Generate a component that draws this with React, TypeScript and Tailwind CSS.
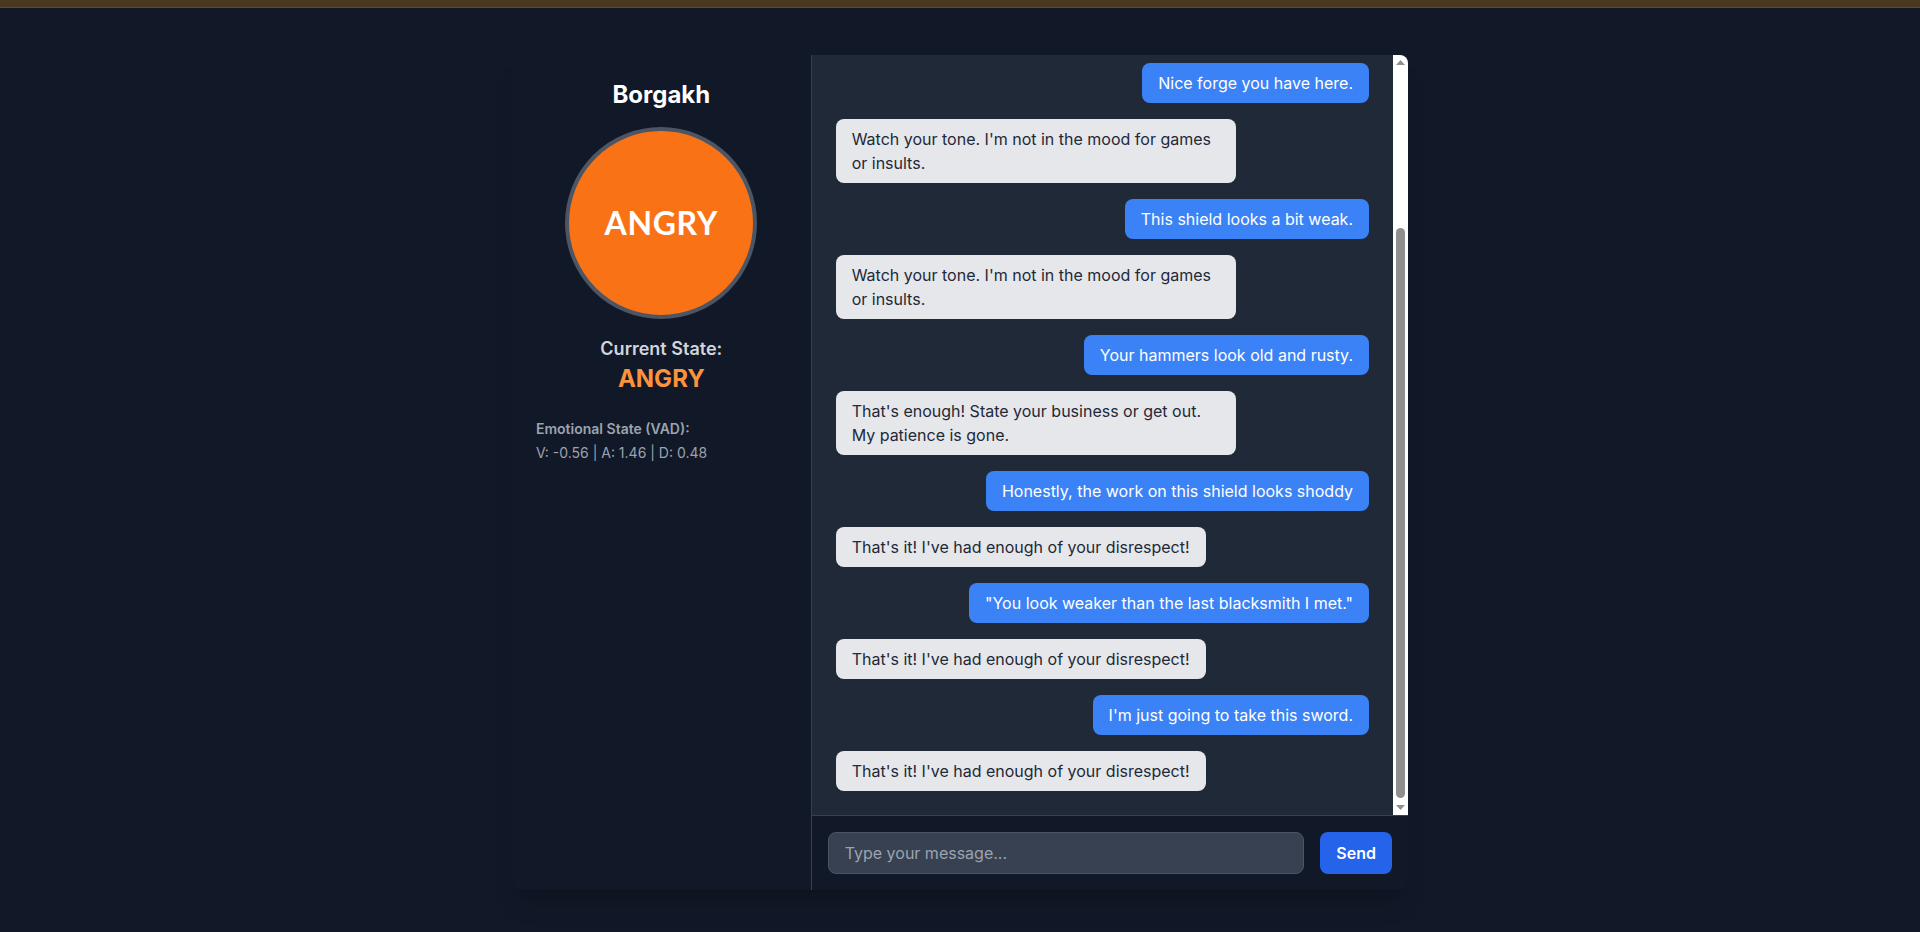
import { useLayoutEffect, useRef, useState } from "react";

type Msg = { from: "user" | "npc"; text: string };

const messages: Msg[] = [
  { from: "npc", text: "Hmph. What do you want?" },
  { from: "user", text: "Hello there, blacksmith." },
  { from: "npc", text: "Welcome to my forge. Look around, but don't touch anything you can't afford." },
  { from: "user", text: "Nice forge you have here." },
  { from: "npc", text: "Watch your tone. I'm not in the mood for games or insults." },
  { from: "user", text: "This shield looks a bit weak." },
  { from: "npc", text: "Watch your tone. I'm not in the mood for games or insults." },
  { from: "user", text: "Your hammers look old and rusty." },
  { from: "npc", text: "That's enough! State your business or get out. My patience is gone." },
  { from: "user", text: "Honestly, the work on this shield looks shoddy" },
  { from: "npc", text: "That's it! I've had enough of your disrespect!" },
  { from: "user", text: "\"You look weaker than the last blacksmith I met.\"" },
  { from: "npc", text: "That's it! I've had enough of your disrespect!" },
  { from: "user", text: "I'm just going to take this sword." },
  { from: "npc", text: "That's it! I've had enough of your disrespect!" },
];

function ScrollArrow({ down }: { down?: boolean }) {
  return (
    <div className="h-[15px] flex items-center justify-center">
      <svg width="9" height="5" viewBox="0 0 9 5">
        <polygon points={down ? "0,0 9,0 4.5,5" : "0,5 9,5 4.5,0"} fill="#8f8f8f" />
      </svg>
    </div>
  );
}

export default function App() {
  const listRef = useRef<HTMLDivElement>(null);
  const trackRef = useRef<HTMLDivElement>(null);
  const [thumb, setThumb] = useState({ top: 0, height: 0 });

  // keep the chat pinned to the latest message and size the scrollbar thumb
  useLayoutEffect(() => {
    const el = listRef.current;
    const track = trackRef.current;
    if (!el || !track) return;
    el.scrollTop = el.scrollHeight;
    const trackH = track.clientHeight - 4;
    const h = Math.max(20, (trackH * el.clientHeight) / el.scrollHeight);
    const max = el.scrollHeight - el.clientHeight;
    const top = max > 0 ? ((trackH - h) * el.scrollTop) / max : 0;
    setThumb({ top: top + 2, height: h });
  }, []);

  return (
    <div className="min-h-screen bg-[#111827] font-['Inter',sans-serif]">
      <div className="h-2 bg-[#4a3920] border-b border-[#5e4c31]"></div>

      <div className="flex justify-center pt-[47px]">
        <div className="w-full max-w-4xl h-[835px] flex bg-[#111827] rounded-lg shadow-xl overflow-hidden">
          {/* NPC status panel */}
          <div className="w-1/3 p-6 flex flex-col">
            <h2 className="text-2xl font-bold text-white text-center mb-4">Borgakh</h2>
            <div className="mx-auto w-48 h-48 rounded-full border-4 border-[#4b5563] bg-[#f97316] flex items-center justify-center">
              <span className="text-[32px] tracking-[0.02em] font-bold text-white font-['Lato',sans-serif]">ANGRY</span>
            </div>
            <div className="mt-4 text-center">
              <p className="text-lg font-semibold text-[#d1d5db]">Current State:</p>
              <p className="text-2xl font-bold text-[#fb923c]">ANGRY</p>
            </div>
            <div className="mt-6 text-sm text-[#9ca3af]">
              <p className="font-semibold mb-1">Emotional State (VAD):</p>
              <p>V: -0.56 | A: 1.46 | D: 0.48</p>
            </div>
          </div>

          {/* Chat */}
          <div className="flex-1 flex flex-col border-l border-[#374151] min-w-0">
            <div className="flex-1 flex min-h-0">
              <div ref={listRef} className="flex-1 overflow-hidden bg-[#1f2937] p-6 space-y-4">
                {messages.map((m, i) => (
                  <div key={i} className={m.from === "user" ? "flex justify-end" : "flex justify-start"}>
                    <div
                      className={
                        m.from === "user"
                          ? "max-w-[75%] px-4 py-2 rounded-lg bg-[#3b82f6] text-white text-base"
                          : "max-w-[75%] px-4 py-2 rounded-lg bg-[#e5e7eb] text-[#1f2937] text-base"
                      }
                    >
                      {m.text}
                    </div>
                  </div>
                ))}
              </div>
              {/* scrollbar */}
              <div className="w-[15px] bg-white flex flex-col">
                <ScrollArrow />
                <div ref={trackRef} className="flex-1 relative">
                  <div
                    className="absolute left-[3px] right-[3px] rounded-full bg-[#8f8f8f]"
                    style={{ top: thumb.top, height: thumb.height }}
                  ></div>
                </div>
                <ScrollArrow down />
              </div>
            </div>
            <div className="border-t border-[#374151] bg-[#111827] p-4 flex gap-4">
              <input
                type="text"
                placeholder="Type your message..."
                className="flex-1 bg-[#374151] border border-[#4b5563] rounded-lg px-4 py-2 text-base text-white placeholder-[#9ca3af] outline-none"
              />
              <button className="bg-[#2563eb] text-white font-semibold px-4 py-2 rounded-lg">Send</button>
            </div>
          </div>
        </div>
      </div>
    </div>
  );
}
